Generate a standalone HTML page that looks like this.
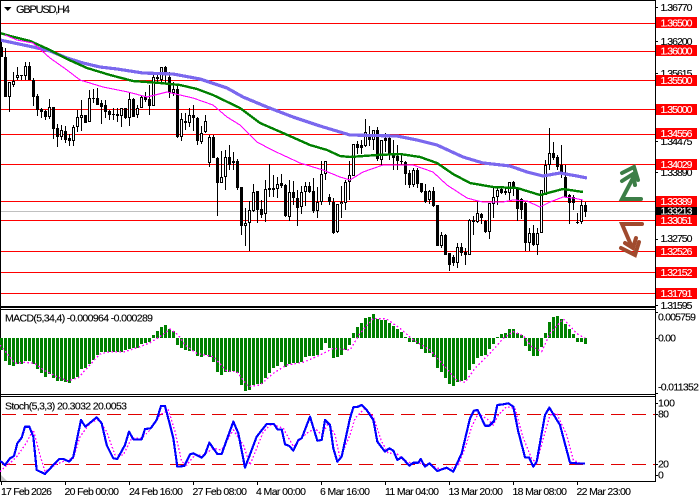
<!DOCTYPE html>
<html>
<head>
<meta charset="utf-8">
<title>GBPUSD,H4</title>
<style>
html,body{margin:0;padding:0;background:#fff;width:700px;height:500px;overflow:hidden}
svg{display:block}
text{font-family:"Liberation Sans",sans-serif;font-size:10.5px;fill:#000;stroke:#000;stroke-width:.12px}
.w{fill:#fff;stroke:#fff}
</style>
</head>
<body>
<svg xmlns="http://www.w3.org/2000/svg" width="700" height="500" viewBox="0 0 700 500">
<rect width="700" height="500" fill="#fff"/>

<!-- horizontal levels -->
<g stroke="#ff0000" stroke-width="1" shape-rendering="crispEdges">
<path d="M1 23.5H655M1 51.5H655M1 80.5H655M1 109.5H655M1 134.5H655M1 164.5H655M1 201.5H655M1 220.5H655M1 251.5H655M1 272.5H655M1 293.5H655"/>
</g>
<path d="M1 211.5H655" stroke="#c0c0c0" stroke-width="1" shape-rendering="crispEdges"/>

<!-- candles -->
<g transform="translate(0.5,0)" shape-rendering="crispEdges" fill="none">
<path stroke="#000" stroke-width="1" d="M1 42V57M5 48V97M9 82V112M13 72V87M17 67V80M21 75V80M25 62V80M29 62V80M33 78V106M37 94V116M41 108V118M45 110V120M49 99V119M53 107V139M57 124V147M61 125V140M65 126V143M69 134V146M73 125V146M77 110V132M81 100V131M85 115V123M89 90V122M93 89V103M97 88V105M101 100V124M105 100V118M109 110V120M113 108V120M117 108V122M121 108V127M125 108V119M129 92V126M133 98V117M137 105V118M141 96V108M145 92V102M149 85V115M153 72V106M157 72V83M161 67V82M165 66V83M169 72V98M173 82V96M177 85V138M181 113V141M185 113V130M189 108V127M193 105V131M197 117V145M201 126V144M205 115V133M209 135V167M213 135V158M217 157V216M221 151V183M225 150V190M229 145V170M233 152V170M237 159V190M241 187V235M245 208V246M249 201V251M253 184V212M257 191V223M261 200V218M265 180V222M269 164V197M273 175V197M277 177V198M281 174V188M285 184V217M289 180V221M293 181V205M297 190V226M301 186V214M305 182V206M309 182V193M313 178V213M317 187V218M321 161V205M325 161V180M329 194V205M333 198V234M337 204V233M341 186V218M345 180V210M349 161V200M353 144V176M357 141V154M361 140V154M365 119V147M369 126V146M373 130V150M377 127V161M381 140V165M385 133V152M389 135V160M393 140V170M397 145V170M401 153V165M405 161V185M409 170V188M413 168V187M417 168V188M421 183V193M425 184V203M429 190V204M433 187V207M437 205V246M441 232V248M445 234V255M449 253V271M453 255V266M457 243V268M461 243V256M465 248V265M469 219V255M473 216V235M477 201V223M481 213V224M485 220V233M489 203V239M493 188V218M497 188V205M501 187V194M505 187V195M509 182V200M513 181V196M517 187V221M521 198V219M525 202V251M529 228V251M533 225V246M537 228V255M541 190V233M545 160V195M549 128V170M553 142V160M557 155V170M561 145V178M565 165V197M569 194V224M573 195V210M577 213V224M581 200V224M585 202V217"/>
<path stroke="#000" stroke-width="3" d="M1 47V57M5 57V97M9 82V97M13 81V85M17 75V78M21 75V76M25 66V76M29 66V80M33 80V97M37 96V110M41 109V112M45 111V117M49 107V117M53 107V129M57 128V137M61 130V137M65 131V140M69 138V141M73 127V141M77 117V127M81 115V118M85 115V123M89 98V122M93 98V99M97 98V105M101 103V107M105 105V112M109 111V115M113 114V115M117 114V116M121 108V116M125 108V118M129 99V118M133 99V117M137 108V115M141 97V108M145 97V100M149 99V106M153 77V106M157 77V79M161 67V80M165 67V75M169 77V93M173 89V93M177 89V137M181 119V137M185 121V123M189 115V123M193 115V118M197 118V141M201 133V142M205 121V132M209 137V163M213 137V158M217 158V183M221 177V183M225 157V177M229 157V165M233 161V163M237 161V188M241 187V226M245 223V226M249 210V223M253 192V211M257 191V210M261 209V215M265 189V214M269 188V190M273 188V190M277 184V189M281 183V186M285 185V216M289 192V217M293 192V198M297 198V208M301 192V207M305 186V192M309 186V192M313 191V211M317 202V211M321 174V202M325 161V174M329 197V202M333 202V233M337 204V232M341 202V204M345 182V203M349 175V182M353 144V176M357 144V148M361 145V148M365 132V146M369 137V140M373 130V140M377 130V159M381 140V160M385 138V141M389 138V155M393 155V158M397 156V161M401 161V162M405 162V174M409 173V185M413 170V185M417 170V184M421 183V192M425 191V202M429 191V200M433 191V206M437 205V246M441 235V246M445 235V255M449 253V265M453 257V263M457 247V263M461 247V253M465 252V255M469 220V255M473 220V222M477 213V222M481 214V218M485 221V232M489 203V232M493 197V204M497 190V197M501 189V193M505 191V193M509 182V193M513 182V188M517 188V209M521 199V210M525 203V243M529 233V243M533 233V245M537 233V245M541 190V233M545 165V195M549 153V165M553 153V158M557 157V167M561 165V172M565 177V197M569 195V203M573 197V203M577 222V223M581 205V222M585 205V212"/>
<path stroke="#fff" stroke-width="1" d="M9 83V96M13 82V84M17 76V77M25 67V75M49 108V116M61 131V136M73 128V140M77 118V126M81 116V117M89 99V121M121 109V115M129 100V117M137 109V114M141 98V107M153 78V105M161 68V79M173 90V92M181 120V136M189 116V122M201 134V141M205 122V131M209 138V162M221 178V182M225 158V176M245 224V225M249 211V222M253 193V210M265 190V213M277 185V188M289 193V216M301 193V206M305 187V191M317 203V210M321 175V201M325 162V173M337 205V231M341 203V203.5M345 183V202M349 176V181M353 145V175M365 133V145M373 131V139M381 141V159M413 171V184M429 192V199M441 236V245M457 248V262M469 221V254M477 214V221M489 204V231M493 198V203M497 191V196M509 183V192M529 234V242M537 234V244M541 191V232M545 166V194M549 154V164M581 206V221"/>
</g>

<!-- moving averages -->
<g fill="none" shape-rendering="crispEdges" stroke-linejoin="round">
<polyline stroke="#7b68ee" stroke-width="3.2" points="0,40 33,47 50,51 67,58 83,63 100,67 117,69 143,73 173,74 200,79 227,88 243,97 267,107 293,117 320,126 350,135 397,136 417,140 437,145 450,151 463,157 483,163 510,166 527,172 543,176 560,173 577,176 587,178"/>
<polyline stroke="#008000" stroke-width="2.4" points="0,33 10,36 30,41 50,50 67,59 87,68 110,75 133,81 160,83 180,85 197,89 213,95 240,108 260,123 283,133 310,145 327,150 340,156 350,157 377,155 400,154 420,157 437,163 453,174 470,183 493,187 517,188 540,195 563,189 583,192"/>
<polyline stroke="#ff00ff" stroke-width="1.1" points="5,35 17,40 33,43 50,58 67,70 80,80 103,87 128,92 147,97 167,92 193,98 213,105 227,117 240,125 257,142 272,150 300,163 323,170 340,177 350,180 363,172 383,165 413,165 433,172 447,185 467,198 478,201 483,202 503,202 513,200 527,201 540,207 550,202 563,197 573,198 583,200"/>
</g>

<!-- frame -->
<g fill="#000" shape-rendering="crispEdges">
<rect x="0" y="0" width="656" height="1"/>
<rect x="0" y="0" width="1" height="482"/>
<rect x="655" y="0" width="1" height="482"/>
<rect x="0" y="306" width="656" height="2"/>
<rect x="0" y="309" width="656" height="1"/>
<rect x="0" y="394" width="656" height="1"/>
<rect x="0" y="396" width="656" height="1"/>
<rect x="0" y="481" width="656" height="1"/>
<path d="M655 7h3v1h-3zM655 41h3v1h-3zM655 73h3v1h-3zM655 141h3v1h-3zM655 172h3v1h-3zM655 239h3v1h-3zM655 305h3v1h-3zM655 312h3v1h-3zM655 338h3v1h-3zM655 393h3v1h-3zM655 403h3v1h-3zM655 414h3v1h-3zM655 464h3v1h-3zM655 475h3v1h-3zM1 482h1v3h-1zM65 482h1v3h-1zM129 482h1v3h-1zM193 482h1v3h-1zM257 482h1v3h-1zM321 482h1v3h-1zM385 482h1v3h-1zM449 482h1v3h-1zM513 482h1v3h-1zM577 482h1v3h-1z"/>
</g>

<!-- title -->
<path d="M4 7H11.5L7.75 11Z" fill="#000"/>
<text x="16" y="13" style="font-size:11px" textLength="54">GBPUSD,H4</text>

<!-- axis labels (behind the red flags) -->
<g>
<text x="660.5" y="11" textLength="32">1.36770</text>
<text x="660.5" y="45" textLength="32">1.36200</text>
<text x="660.5" y="77" textLength="32">1.35615</text>
<text x="660.5" y="145" textLength="32">1.34475</text>
<text x="660.5" y="176" textLength="32">1.33890</text>
<text x="660.5" y="242" textLength="32">1.32750</text>
<text x="660.5" y="309" textLength="32">1.31595</text>
</g>
<rect x="656" y="207" width="41" height="9" fill="#000" shape-rendering="crispEdges"/>
<text class="w" x="660.5" y="214.5" textLength="32">1.33213</text>
<g fill="#ff0000" shape-rendering="crispEdges">
<rect x="656" y="17" width="41" height="11"/>
<rect x="656" y="45" width="41" height="11"/>
<rect x="656" y="75" width="41" height="11"/>
<rect x="656" y="104" width="41" height="11"/>
<rect x="656" y="128" width="41" height="11"/>
<rect x="656" y="159" width="41" height="11"/>
<rect x="656" y="196" width="41" height="11"/>
<rect x="656" y="215" width="41" height="11"/>
<rect x="656" y="246" width="41" height="11"/>
<rect x="656" y="267" width="41" height="11"/>
<rect x="656" y="288" width="41" height="11"/>
</g>
<g>
<text class="w" x="660.5" y="26.5" textLength="32">1.36500</text>
<text class="w" x="660.5" y="54.5" textLength="32">1.36000</text>
<text class="w" x="660.5" y="84" textLength="32">1.35500</text>
<text class="w" x="660.5" y="113" textLength="32">1.35000</text>
<text class="w" x="660.5" y="137" textLength="32">1.34556</text>
<text class="w" x="660.5" y="168" textLength="32">1.34029</text>
<text class="w" x="660.5" y="205" textLength="32">1.33389</text>
<text class="w" x="660.5" y="224" textLength="32">1.33051</text>
<text class="w" x="660.5" y="255" textLength="32">1.32526</text>
<text class="w" x="660.5" y="276" textLength="32">1.32152</text>
<text class="w" x="660.5" y="297" textLength="32">1.31791</text>
</g>

<!-- arrows -->
<g fill="none" stroke="#3c7e47" stroke-width="4" stroke-linecap="round" stroke-linejoin="miter">
<path d="M641 199H622L633 178"/>
<path d="M622 173L634 167L638 180"/>
<path d="M622 181L633 174L635 185"/>
</g>
<g fill="none" stroke="#a04a2e" stroke-width="4" stroke-linecap="round" stroke-linejoin="miter">
<path d="M642 224H622L631 245"/>
<path d="M621 248L635 255L639 242"/>
<path d="M625 243L633 248L636 238"/>
</g>

<!-- MACD -->
<text x="5" y="321.5" textLength="148">MACD(5,34,4) -0.000964 -0.000289</text>
<path transform="translate(0.5,0)" fill="none" stroke="#008000" stroke-width="3" shape-rendering="crispEdges" d="M1 338V350M5 338V361M9 338V365M13 338V366M17 338V364M21 338V364M25 338V361M29 338V361M33 338V364M37 338V369M41 338V373M45 338V377M49 338V374M53 338V378M57 338V381M61 338V381M65 338V382M69 338V383M73 338V379M77 338V377M81 338V369M85 338V368M89 338V364M93 338V360M97 338V355M101 338V352M105 338V352M109 338V352M113 338V352M117 338V352M121 338V352M125 338V350M129 338V349M133 338V348M137 338V348M141 338V344M145 338V343M149 338V342M153 338V335M157 338V331M161 338V327M165 338V325M169 338V329M173 338V331M177 338V345M181 338V348M185 338V350M189 338V351M193 338V351M197 338V356M201 338V357M205 338V355M209 338V357M213 338V362M217 338V372M221 338V375M225 338V372M229 338V372M233 338V371M237 338V373M241 338V385M245 338V391M249 338V390M253 338V385M257 338V384M261 338V384M265 338V378M269 338V373M273 338V368M277 338V366M281 338V362M285 338V367M289 338V364M293 338V363M297 338V363M301 338V362M305 338V357M309 338V356M313 338V356M317 338V355M321 338V350M325 338V343M329 338V348M333 338V358M337 338V357M341 338V355M345 338V350M349 338V345M353 338V333M357 338V327M361 338V323M365 338V318M369 338V317M373 338V314M377 338V319M381 338V320M385 338V320M389 338V323M393 338V326M397 338V329M401 338V332M405 338V337M409 338V342M413 338V342M417 338V344M421 338V349M425 338V353M429 338V353M433 338V357M437 338V368M441 338V372M445 338V378M449 338V384M453 338V386M457 338V382M461 338V381M465 338V380M469 338V370M473 338V364M477 338V358M481 338V356M485 338V355M489 338V349M493 338V344M497 338V337M501 338V334M505 338V333M509 338V329M513 338V329M517 338V333M521 338V335M525 338V346M529 338V351M533 338V356M537 338V356M541 338V347M545 338V333M549 338V322M553 338V317M557 338V316M561 338V319M565 338V324M569 338V329M573 338V334M577 338V342M581 338V342M585 338V344"/>
<svg x="0" y="305" width="700" height="90" viewBox="0 0 2100 270">
<polyline fill="none" stroke="#ff00ff" stroke-width="4" stroke-dasharray="5 7" shape-rendering="crispEdges" points="0,120 25,150 45,175 75,172 105,175 130,195 170,215 205,228 235,218 265,185 300,147 330,140 375,140 420,125 450,113 480,95 510,72 535,90 555,120 590,145 640,155 680,198 710,200 745,245 780,240 820,205 860,180 910,172 960,150 1000,130 1050,135 1080,85 1120,40 1160,42 1200,70 1240,105 1290,135 1330,180 1370,225 1395,232 1425,190 1470,145 1510,100 1540,80 1570,92 1595,125 1625,140 1650,85 1690,42 1730,85 1755,100"/>
</svg>
<text x="658" y="320.5" textLength="38">0.005759</text>
<text x="658" y="341.5" textLength="18">0.00</text>
<text x="658" y="390.5" textLength="41">-0.011352</text>

<!-- Stoch -->
<text x="5" y="409.5" textLength="122">Stoch(5,3,3) 20.3032 20.0053</text>
<path d="M1 475L7 481H1Z" fill="#c8c8c8"/>
<path d="M2 414.5H655M2 464.5H655" stroke="#e00000" stroke-width="1" stroke-dasharray="14 7" fill="none" shape-rendering="crispEdges"/>
<svg x="0" y="395" width="700" height="105" viewBox="0 0 2100 315">
<polyline fill="none" stroke="#ff00ff" stroke-width="4" stroke-dasharray="5 6" shape-rendering="crispEdges" points="0,230 15,215 30,205 50,185 75,150 100,105 120,180 135,230 165,210 195,197 220,190 240,125 270,85 295,72 320,110 345,180 370,180 395,130 425,130 450,105 480,60 505,45 525,110 545,200 560,210 585,180 610,180 640,160 665,165 700,105 730,150 750,210 790,110 815,87 850,100 880,155 920,115 945,100 965,120 985,85 1005,120 1020,190 1050,120 1065,70 1095,40 1120,65 1145,140 1165,175 1190,175 1210,195 1235,205 1260,205 1290,210 1315,220 1350,222 1375,210 1395,160 1415,95 1435,55 1465,75 1480,90 1495,60 1520,35 1545,40 1570,130 1595,190 1610,205 1630,130 1650,60 1670,55 1700,120 1720,195 1740,205 1755,207"/>
<polyline fill="none" stroke="#0000ff" stroke-width="6.5" stroke-linejoin="round" shape-rendering="crispEdges" points="0,197 15,210 30,190 42,183 52,145 65,128 75,95 88,95 100,125 110,225 135,237 160,210 178,192 190,192 208,200 220,185 243,75 256,95 290,67 305,85 320,150 340,190 352,192 375,150 387,110 400,133 425,133 435,102 452,100 470,75 483,33 495,33 510,90 520,130 532,215 553,213 570,178 580,175 605,188 615,178 628,143 652,177 665,177 680,135 700,80 715,115 735,218 770,125 800,87 822,87 832,103 845,103 855,148 868,153 880,167 895,135 905,130 930,65 952,137 965,135 975,75 990,90 1000,160 1012,200 1025,185 1050,70 1060,37 1075,35 1085,30 1100,45 1120,75 1132,140 1155,170 1168,160 1180,167 1192,195 1205,187 1228,212 1240,203 1255,203 1262,192 1275,215 1288,205 1312,228 1340,218 1360,230 1385,175 1410,70 1422,47 1433,45 1455,92 1468,92 1482,78 1492,30 1510,28 1525,25 1540,35 1555,110 1575,187 1587,187 1600,215 1610,200 1635,60 1648,38 1680,90 1710,203 1730,205 1755,205"/>
</svg>
<text x="658" y="406.5" textLength="17">100</text>
<text x="658" y="417.5" textLength="11">80</text>
<text x="658" y="467.5" textLength="11">20</text>
<text x="658" y="478.5">0</text>

<!-- time axis -->
<g>
<text x="1" y="495" textLength="51">17 Feb 2026</text>
<text x="64.5" y="495" textLength="54.5">20 Feb 00:00</text>
<text x="129" y="495" textLength="54">24 Feb 16:00</text>
<text x="192.5" y="495" textLength="54.5">27 Feb 08:00</text>
<text x="256" y="495" textLength="50">4 Mar 00:00</text>
<text x="320" y="495" textLength="50">6 Mar 16:00</text>
<text x="385" y="495" textLength="54">11 Mar 04:00</text>
<text x="448.5" y="495" textLength="54.5">13 Mar 20:00</text>
<text x="512.5" y="495" textLength="54.5">18 Mar 08:00</text>
<text x="576.5" y="495" textLength="54.5">22 Mar 23:00</text>
</g>
</svg>
</body>
</html>
